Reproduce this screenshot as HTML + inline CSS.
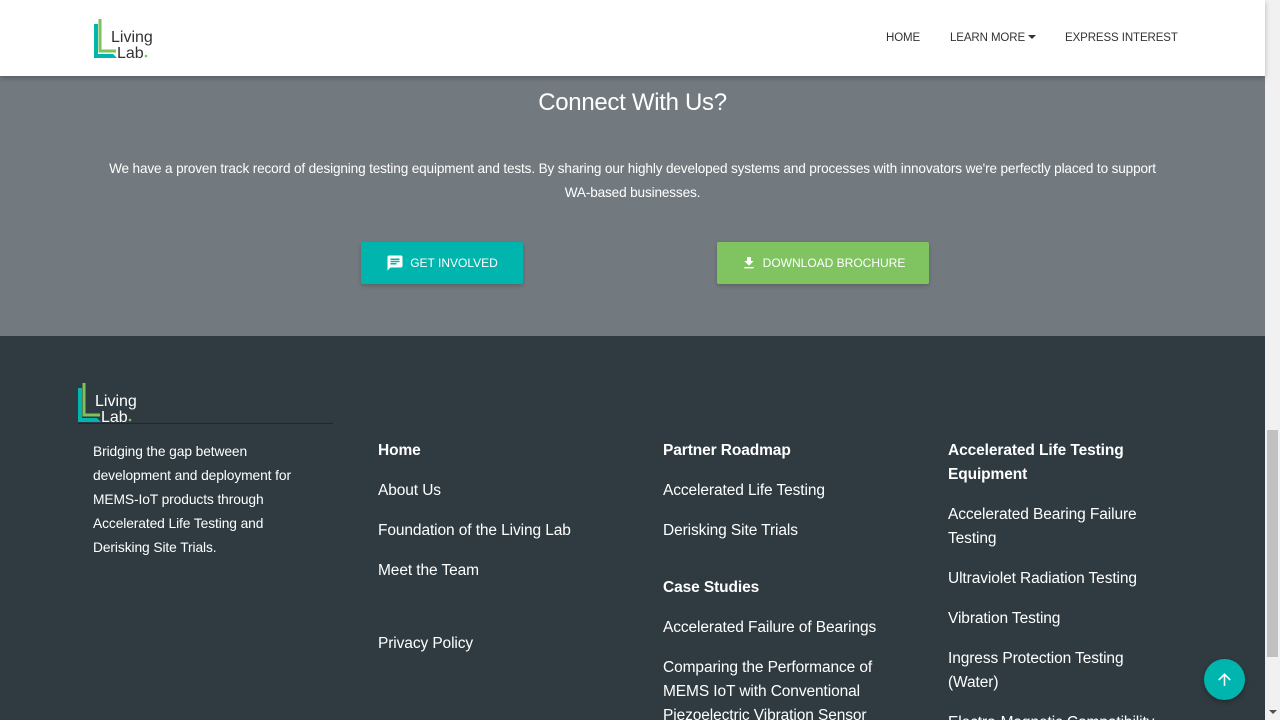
<!DOCTYPE html>
<html style="overflow:hidden;height:720px"><head><meta charset="utf-8"><style>
*{margin:0;padding:0;box-sizing:border-box}
body{width:1280px;height:720px;overflow:hidden;font-family:"Liberation Sans",sans-serif;background:#2f3b40;position:relative}
.sb{position:absolute;right:0;top:0;width:15px;height:720px;background:#f1f1f1}
.sb .th{position:absolute;left:2px;top:430px;width:11px;height:227px;background:#c1c1c1}
.sb .ar{position:absolute;left:4px;top:710px;border-left:4px solid transparent;border-right:4px solid transparent;border-top:4px solid #505050}
.hero{position:absolute;left:0;top:0;width:1265px;height:336px;background:#737a7f;color:#fff;text-align:center}
header{position:absolute;left:0;top:0;width:1265px;height:76px;background:#fff;box-shadow:0 2px 5px rgba(0,0,0,.25);z-index:2}
nav{position:absolute;top:32px;font-size:11.5px;letter-spacing:-0.1px;color:#333}
h2{position:absolute;top:89px;width:100%;font-weight:normal;font-size:24px;letter-spacing:-0.3px}
.p{position:absolute;top:157px;left:90px;width:1085px;font-size:13.6px;letter-spacing:-0.15px;line-height:24px}
.btn{position:absolute;top:242px;height:42px;color:#fff;font-size:12px;display:flex;align-items:center;justify-content:center;gap:6px;border-radius:2px;box-shadow:0 2px 4px rgba(0,0,0,.2)}
footer{position:absolute;top:336px;left:0;width:1265px;height:384px;overflow:hidden;color:#fff}
.col{position:absolute;font-size:15.5px;letter-spacing:-0.1px;line-height:24px}
.col b{font-weight:700}
.col div{margin-bottom:16px}
.up{position:absolute;left:1204px;top:659px;width:41px;height:41px;border-radius:50%;background:#00b5ad;box-shadow:0 2px 5px rgba(0,0,0,.3)}
</style></head><body>
<div class="hero">
<h2>Connect With Us?</h2>
<div class="p">We have a proven track record of designing testing equipment and tests. By sharing our highly developed systems and processes with innovators we're perfectly placed to support <span style="white-space:nowrap">WA-based</span> businesses.</div>
<div class="btn" style="left:361px;width:162px;background:#00b5ad"><svg width="18" height="18" viewBox="0 0 24 24"><path fill="#fff" d="M20 2H4c-1.1 0-2 .9-2 2v18l4-4h14c1.1 0 2-.9 2-2V4c0-1.1-.9-2-2-2zM6 9h12v2H6zm8 5H6v-2h8zm4-6H6V6h12z"/></svg>GET INVOLVED</div>
<div class="btn" style="left:717px;width:212px;background:#80c462"><svg width="16" height="16" viewBox="0 0 24 24"><path fill="#fff" d="M19 9h-4V3H9v6H5l7 7 7-7zM5 18v2h14v-2z"/></svg>DOWNLOAD BROCHURE</div>
</div>
<header>
<svg style="position:absolute;left:93px;top:18px" width="64" height="42" viewBox="0 0 64 42"><path d="M7 1v32h16" fill="none" stroke="#7dc35a" stroke-width="3"/><path d="M1 6v34h23l-4-4H5V6z" fill="#00b5ad"/><text x="18" y="24" font-size="16" font-family="Liberation Sans" fill="#333">Living</text><text x="24" y="40" font-size="16" font-family="Liberation Sans" fill="#333">Lab</text><circle cx="53" cy="38" r="1.3" fill="#7dc35a"/></svg>
<nav style="left:886px">HOME</nav>
<nav style="left:950px">LEARN MORE <span style="display:inline-block;border-left:4px solid transparent;border-right:4px solid transparent;border-top:4px solid #333;vertical-align:2px"></span></nav>
<nav style="left:1065px">EXPRESS INTEREST</nav>
</header>
<footer>
<svg style="position:absolute;left:77px;top:46px" width="64" height="42" viewBox="0 0 64 42"><path d="M7 1v32h16" fill="none" stroke="#7dc35a" stroke-width="3"/><path d="M1 6v34h23l-4-4H5V6z" fill="#00b5ad"/><text x="18" y="24" font-size="16" font-family="Liberation Sans" fill="#fff">Living</text><text x="24" y="40" font-size="16" font-family="Liberation Sans" fill="#fff">Lab</text><circle cx="53" cy="38" r="1.3" fill="#7dc35a"/></svg>
<div style="position:absolute;left:78px;top:87px;width:255px;height:1px;background:#1f282c"></div>
<div class="col" style="left:93px;top:104px;width:220px;font-size:13.8px">Bridging the gap between development and deployment for MEMS-IoT products through Accelerated Life Testing and Derisking Site Trials.</div>
<div class="col" style="left:378px;top:103px"><div><b>Home</b></div><div>About Us</div><div>Foundation of the Living Lab</div><div>Meet the Team</div><div style="margin-top:49px">Privacy Policy</div></div>
<div class="col" style="left:663px;top:103px;width:230px"><div><b>Partner Roadmap</b></div><div>Accelerated Life Testing</div><div style="margin-bottom:33px">Derisking Site Trials</div><div><b>Case Studies</b></div><div>Accelerated Failure of Bearings</div><div>Comparing the Performance of MEMS IoT with Conventional Piezoelectric Vibration Sensor</div></div>
<div class="col" style="left:948px;top:103px;width:220px"><div><b>Accelerated Life Testing Equipment</b></div><div>Accelerated Bearing Failure Testing</div><div>Ultraviolet Radiation Testing</div><div>Vibration Testing</div><div>Ingress Protection Testing (Water)</div><div>Electro-Magnetic Compatibility</div></div>
</footer>
<div class="up"><svg style="position:absolute;left:11px;top:11px" width="19" height="19" viewBox="0 0 24 24"><path fill="#fff" d="M4 12l1.41 1.41L11 7.83V20h2V7.83l5.58 5.59L20 12l-8-8z"/></svg></div>
<div class="sb"><div class="th"></div><div class="ar"></div></div>
</body></html>
